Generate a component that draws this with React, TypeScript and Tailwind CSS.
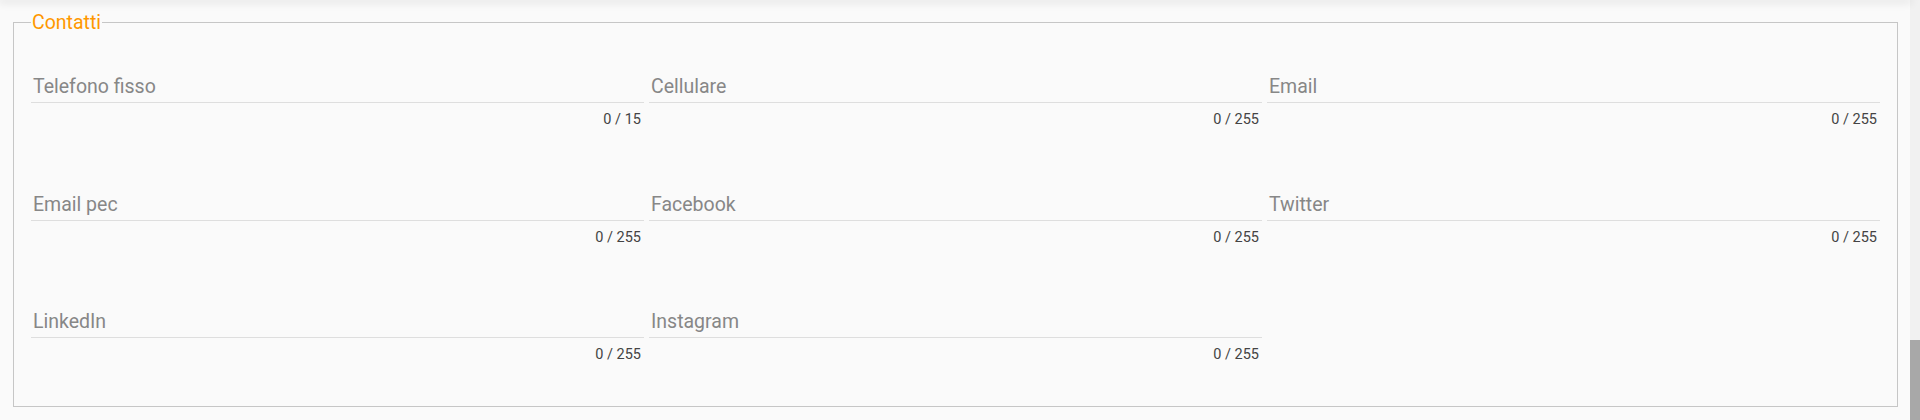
import React from "react";

type Field = { label: string; max: number };

const fields: Field[] = [
  { label: "Telefono fisso", max: 15 },
  { label: "Cellulare", max: 255 },
  { label: "Email", max: 255 },
  { label: "Email pec", max: 255 },
  { label: "Facebook", max: 255 },
  { label: "Twitter", max: 255 },
  { label: "LinkedIn", max: 255 },
  { label: "Instagram", max: 255 },
];

function TextField({ label, max }: Field) {
  return (
    <div className="flex flex-col">
      <div className="border-b border-[#dedede] pb-[4px] pl-[2px] text-[19.5px] leading-[23px] text-[#878787]">
        {label}
      </div>
      <div className="mt-[7px] pr-[3px] text-right text-[14.5px] leading-[20px] text-[#444444]">
        0 / {max}
      </div>
    </div>
  );
}

export default function App() {
  return (
    <div className="flex h-[420px] overflow-hidden bg-[#fafafa] font-['Roboto','Liberation_Sans',sans-serif]">
      <div className="relative flex-1">
        <div className="absolute left-0 right-0 top-0 h-0 shadow-[0_0_10px_2px_rgba(0,0,0,0.14)]" />
        <fieldset className="ml-[13px] mr-[12px] mt-[11px] border border-[#c6c6c6] px-[17px] pb-[41px] pt-[41px]">
          <legend className="px-[1px] text-[19.5px] leading-[23px] text-[#ff9800]">Contatti</legend>
          <div className="grid grid-cols-3 gap-x-[5px] gap-y-[62.5px]">
            {fields.map((f) => (
              <TextField key={f.label} {...f} />
            ))}
          </div>
        </fieldset>
      </div>
      <div className="flex w-[10px] flex-col justify-end bg-[#f1f1f1]">
        <div className="h-[80px] bg-[#a8a8a8]" />
      </div>
    </div>
  );
}
